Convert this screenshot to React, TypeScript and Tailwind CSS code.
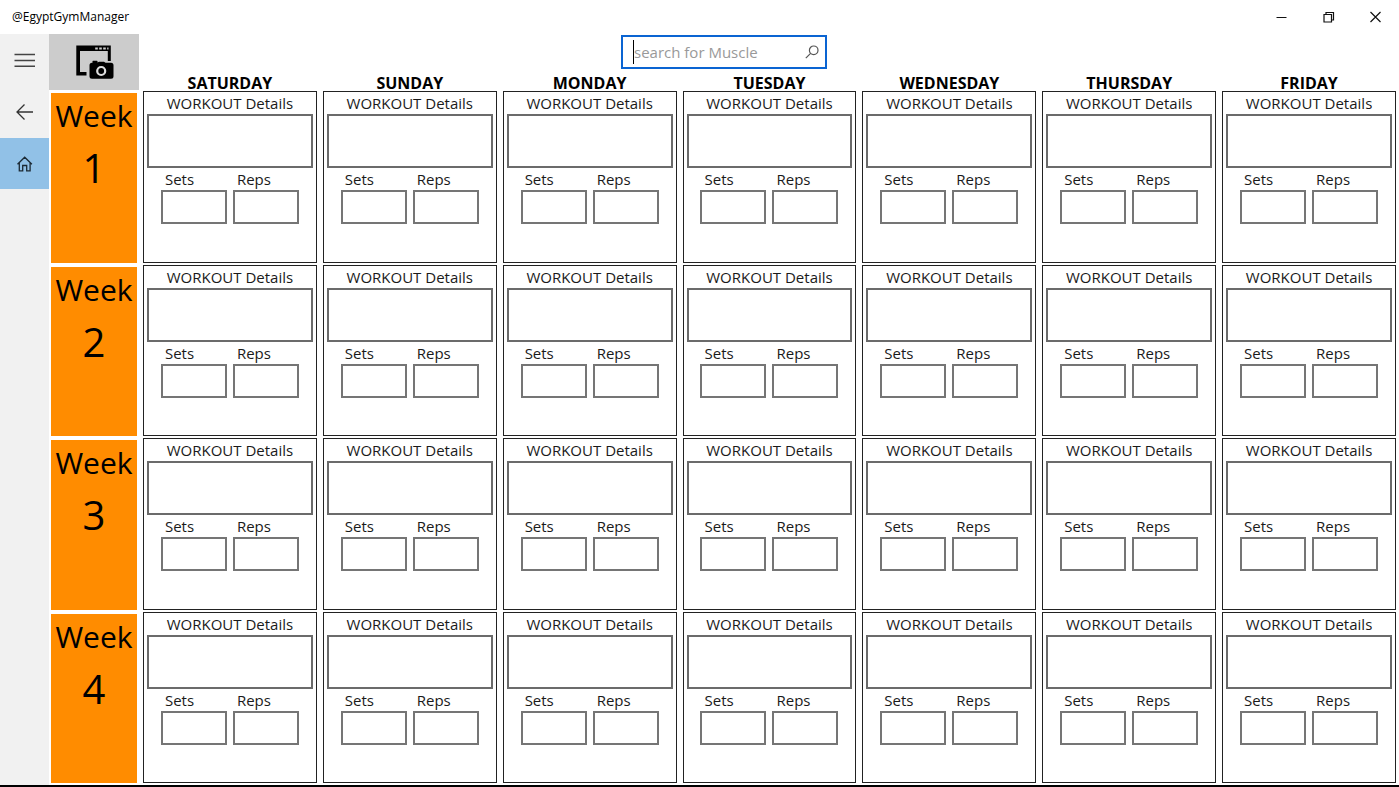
import React from "react";

const DAYS = ["SATURDAY", "SUNDAY", "MONDAY", "TUESDAY", "WEDNESDAY", "THURSDAY", "FRIDAY"];
const WEEKS = [1, 2, 3, 4];

function TitleBar() {
  return (
    <header className="flex h-[34px] shrink-0 items-center justify-between pl-3">
      <h1 className="text-xs">@EgyptGymManager</h1>
      <div className="flex h-full">
        <button type="button" aria-label="Minimize" className="flex w-[47px] items-center justify-center">
          <svg width="12" height="12" viewBox="0 0 12 12" fill="none" stroke="#111">
            <path d="M0.500 6.500h10" />
          </svg>
        </button>
        <button type="button" aria-label="Restore" className="flex w-[47px] items-center justify-center">
          <svg width="12" height="12" viewBox="0 0 12 12" fill="none" stroke="#111" strokeWidth="1.2">
            <path d="M1 3.500h7.500v7.500H1zM3 3.500V1.500h7.500V9h-2" />
          </svg>
        </button>
        <button type="button" aria-label="Close" className="flex w-[47px] items-center justify-center">
          <svg width="12" height="12" viewBox="0 0 12 12" fill="none" stroke="#111" strokeWidth="1.2">
            <path d="M0.500 1l10 10M10.500 1L0.500 11" />
          </svg>
        </button>
      </div>
    </header>
  );
}

function Sidebar() {
  return (
    <nav className="flex w-[49px] shrink-0 flex-col bg-[#f1f1f1]">
      <button type="button" aria-label="Menu" className="flex h-[52px] items-center justify-center">
        <svg width="22" height="14" viewBox="0 0 22 14" fill="none" stroke="#444" strokeWidth="1.4">
          <path d="M0.500 1.500h20.500M0.500 7.500h20.500M0.500 13.200h20.500" />
        </svg>
      </button>
      <button type="button" aria-label="Back" className="flex h-[52px] items-center justify-center">
        <svg width="18" height="18" viewBox="0 0 18 18" fill="none" stroke="#333" strokeWidth="1.3">
          <path d="M17 9H1M8.500 1.500L1 9L8.500 16.500" />
        </svg>
      </button>
      <a href="#home" aria-label="Home" className="flex h-[51px] items-center justify-center bg-[#91c1e7]">
        <svg width="16" height="16" viewBox="0 0 16 16" fill="none" stroke="#1c2a35" strokeWidth="1.3">
          <path d="M0.500 8.200L7.700 1.200l7.200 7M2.300 6.800v8h3.400V9.500h4v5.300h3.400v-8" />
        </svg>
      </a>
    </nav>
  );
}

function ScreenshotIcon() {
  return (
    <svg width="40" height="38" viewBox="0 0 40 38">
      <path fill="#000" d="M2.300 2.500h34.500v15.500h-3V8H6v21h6.500v3.500H2.300z" />
      <path fill="#ccc" d="M21.200 4.500h2.600v2h-2.600zM25.200 4.500h2.600v2h-2.600zM29.200 4.500h2.600v2h-2.600zM33.200 4.500h1.300v2h-1.300z" />
      <path
        fill="#000"
        d="M18.500 19.700v-1.500q0-.5.5-.5h4q.5 0 .5.500v1.200l1.500-.7h5l1.500 1h5.500q2.500 0 2.500 2.500V33.200q0 2.500-2.500 2.500h-19q-2.500 0-2.500-2.500V22.200q0-2.500 2.500-2.500z"
      />
      <circle cx="27.200" cy="28" r="4" fill="#000" stroke="#ddd" strokeWidth="2.200" />
    </svg>
  );
}

function SearchBox() {
  return (
    <div className="flex h-[34px] w-[206px] items-center border-2 border-[#0a64d2] pr-1.5 pl-2.5">
      <span className="h-6 w-px shrink-0 bg-black" />
      <input
        type="search"
        aria-label="Search for muscle"
        placeholder="search for Muscle"
        className="h-full min-w-0 flex-1 bg-transparent text-[15px] outline-none placeholder:text-[#999]"
      />
      <button type="button" aria-label="Search">
        <svg width="14" height="14" viewBox="0 0 14 14" fill="none" stroke="#555" strokeWidth="1.2">
          <circle cx="8.700" cy="5.300" r="4.300" />
          <path d="M5.600 8.400L0.800 13.200" />
        </svg>
      </button>
    </div>
  );
}

function SmallField({ id, label }: { id: string; label: string }) {
  return (
    <div className="flex w-[66px] flex-col">
      <label htmlFor={id} className="pl-1 text-[15px] leading-[22px] text-[#1a1a1a]">
        {label}
      </label>
      <input id={id} className="h-[34px] w-full border-2 border-[#757575] px-2 text-[15px] outline-none" />
    </div>
  );
}

function DayCell({ week, day }: { week: number; day: string }) {
  const id = `${day.toLowerCase()}-${week}`;
  return (
    <section className="mx-[3px] mb-0.5 flex flex-col items-center border border-[#222] px-[3px]">
      <label htmlFor={`${id}-details`} className="text-[15px] leading-[22px] text-[#1a1a1a]">
        WORKOUT Details
      </label>
      <textarea
        id={`${id}-details`}
        className="h-[54px] w-full resize-none border-2 border-[#6b6b6b] px-2 text-[15px] outline-none"
      />
      <div className="flex gap-1.5">
        <SmallField id={`${id}-sets`} label="Sets" />
        <SmallField id={`${id}-reps`} label="Reps" />
      </div>
    </section>
  );
}

export default function App() {
  return (
    <div className="flex min-h-screen flex-col border-b-2 border-black bg-white font-['Open_Sans','Noto_Sans',sans-serif] text-black">
      <TitleBar />
      <div className="flex flex-1">
        <Sidebar />
        <main className="flex min-w-0 flex-1 flex-col">
          <div className="flex h-[57px] shrink-0">
            <button
              type="button"
              aria-label="Take screenshot"
              className="mb-px flex w-[90px] shrink-0 items-center justify-center bg-[#ccc]"
            >
              <ScreenshotIcon />
            </button>
            <div className="flex flex-1 flex-col">
              <div className="flex justify-center pt-px pr-[90px]">
                <SearchBox />
              </div>
              <div className="ml-px grid grid-cols-7 text-center">
                {DAYS.map((day) => (
                  <h2 key={day} className="text-base leading-[28px] font-bold">
                    {day}
                  </h2>
                ))}
              </div>
            </div>
          </div>
          <div className="grid flex-1 auto-rows-fr">
            {WEEKS.map((week) => (
              <div key={week} className="grid grid-cols-[91px_repeat(7,minmax(0,1fr))]">
                <div className="my-0.5 mr-[3px] ml-0.5 flex flex-col items-center bg-[#ff8c00]">
                  <span className="text-[30px] leading-[46px]">Week</span>
                  <span className="text-[40px] leading-[58px]">{week}</span>
                </div>
                {DAYS.map((day) => (
                  <DayCell key={day} week={week} day={day} />
                ))}
              </div>
            ))}
          </div>
        </main>
      </div>
    </div>
  );
}
